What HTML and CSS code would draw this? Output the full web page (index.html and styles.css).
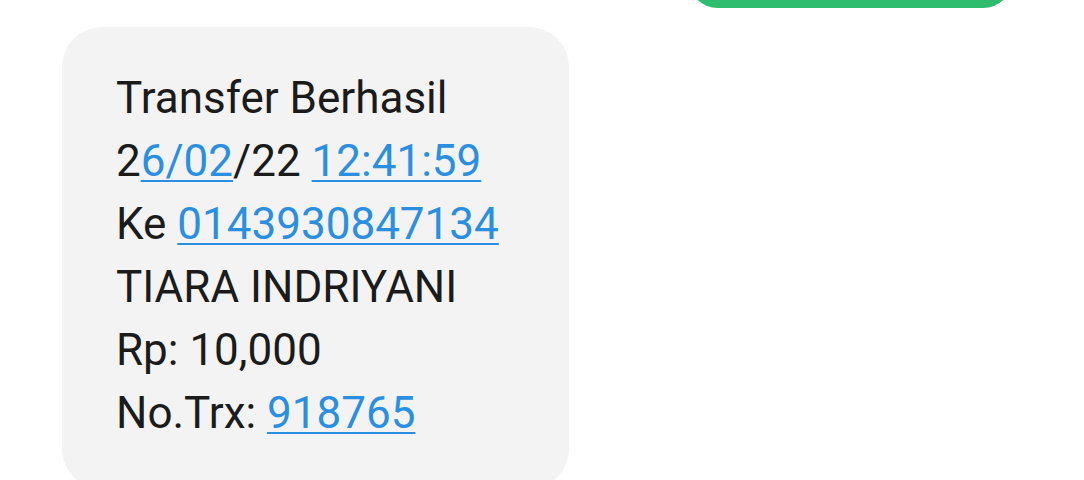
FILE: index.html
```html
<!DOCTYPE html>
<html>
<head>
<meta charset="utf-8">
<link rel="stylesheet" href="styles.css">
</head>
<body>
<div class="thread">
  <div class="sent"></div>
  <div class="received">
    <div class="line">Transfer Berhasil</div>
    <div class="line">2<span class="link">6/02</span>/22 <span class="link">12:41:59</span></div>
    <div class="line">Ke <span class="link">0143930847134</span></div>
    <div class="line">TIARA INDRIYANI</div>
    <div class="line">Rp: 10,000</div>
    <div class="line">No.Trx: <span class="link">918765</span></div>
  </div>
</div>
</body>
</html>
```
FILE: styles.css
```css
html, body {
  margin: 0;
  padding: 0;
  background: #ffffff;
  overflow: hidden;
}
.thread {
  display: flex;
  flex-direction: column;
  width: 1084px;
}
.sent {
  flex-shrink: 0;
  align-self: flex-start;
  margin-left: 688px;
  margin-top: -52px;
  width: 325px;
  height: 60px;
  border-radius: 30px;
  background: #2ebd6f;
}
.received {
  flex-shrink: 0;
  align-self: flex-start;
  margin-left: 62px;
  margin-top: 19px;
  width: 453px;
  padding: 40px 0 44px 54px;
  background: #f3f3f3;
  border-radius: 40px;
  font-family: Roboto, "Noto Sans", sans-serif;
  font-size: 44px;
  line-height: 63px;
  color: #1b1b1b;
}
.line {
  white-space: nowrap;
}
.link {
  color: #2a8fe0;
  text-decoration: underline;
  text-decoration-thickness: 2px;
  text-underline-offset: 4px;
}
```
